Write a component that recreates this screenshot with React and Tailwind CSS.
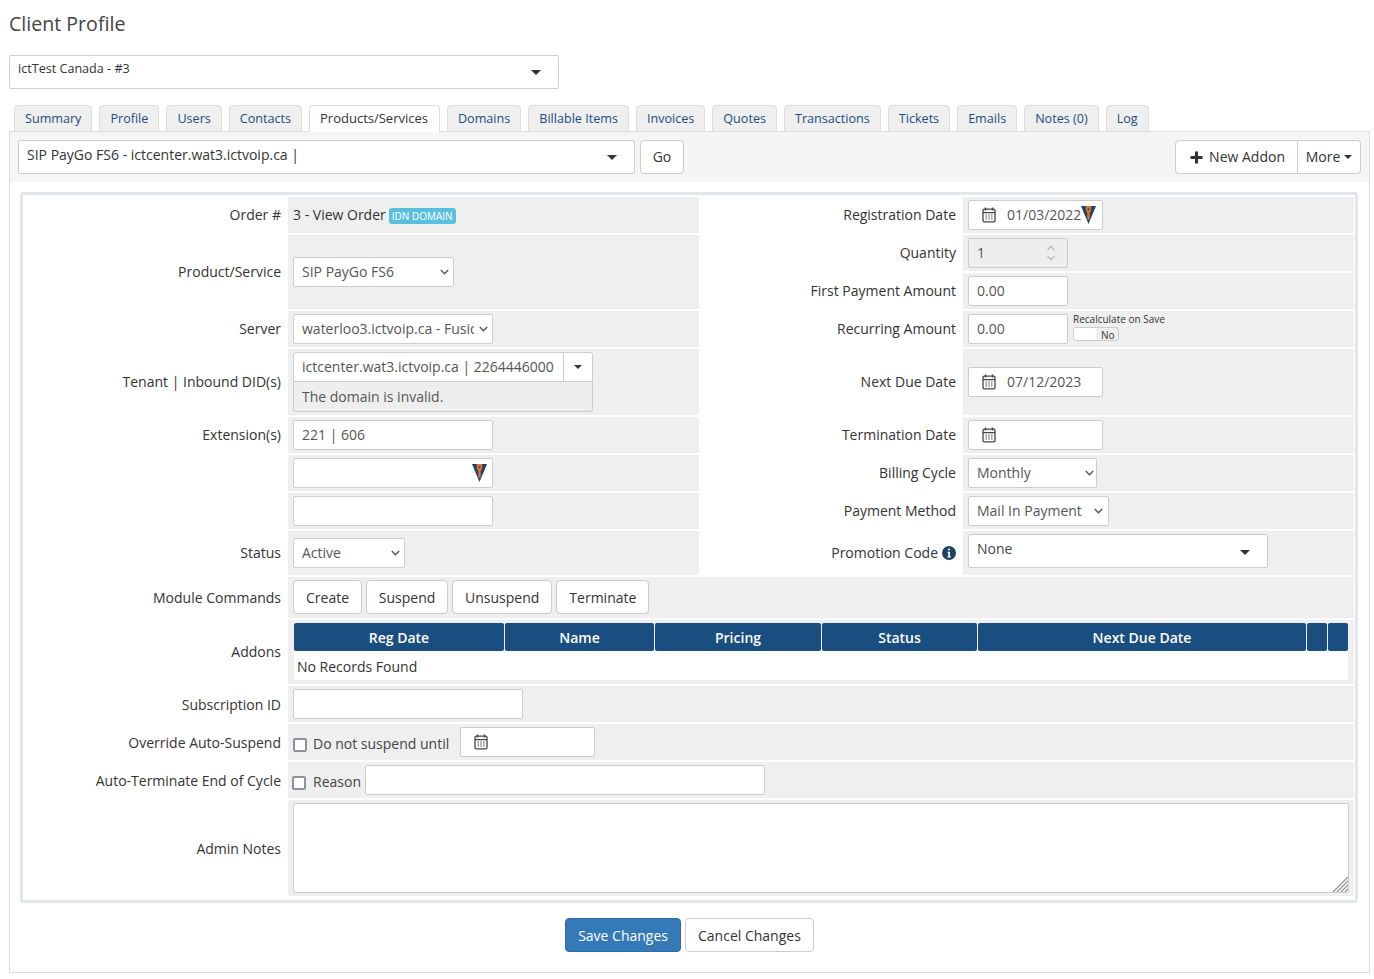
import React from 'react';

const tabs = ['Summary', 'Profile', 'Users', 'Contacts', 'Products/Services', 'Domains', 'Billable Items', 'Invoices', 'Quotes', 'Transactions', 'Tickets', 'Emails', 'Notes (0)', 'Log'];

const Caret = ({ className = '' }) => (
    <span className={`inline-block w-0 h-0 border-x-[5px] border-x-transparent border-t-[5px] border-t-[#333] ${className}`} />
);

const Calendar = () => (
    <svg width="14" height="16" viewBox="0 0 14 16" className="shrink-0">
        <path d="M3.500 .5v3M10.500 .5v3" stroke="#444" strokeWidth="1.400" fill="none" />
        <rect x="1" y="2.200" width="12" height="12.600" rx="1.400" stroke="#444" strokeWidth="1.300" fill="none" />
        <path d="M1 5.600h12" stroke="#444" strokeWidth="1.300" />
        <path d="M3.500 8h7M3.500 10h7M3.500 12h7" stroke="#444" strokeWidth="1.200" strokeDasharray="1.400 1.400" fill="none" />
    </svg>
);

const VoipLogo = () => (
    <svg width="15" height="18" viewBox="0 0 15 18" className="shrink-0">
        <path d="M0 0h15L7.500 18z" fill="#1c4468" />
        <path d="M4.800 0h5.400v4.500L8.700 7v6.500H6.300V7L4.800 4.500z" fill="#e8702a" />
        <circle cx="7.500" cy="3.200" r="1" fill="#1c4468" />
    </svg>
);

const Label = ({ children, className = '' }) => (
    <div className={`flex items-center justify-end pr-[5px] text-[#333] ${className}`}>{children}</div>
);

const Cell = ({ children, className = '' }) => (
    <div className={`bg-[#efefef] flex items-center px-[5px] ${className}`}>{children}</div>
);

const inputClass = 'h-[30px] bg-white border border-[#ccc] rounded-[2px] px-[8px] pb-[2px] text-[#555] outline-none';

const Select = ({ value, className = '', arrowClass = 'right-[5px]' }) => (
    <div className={`relative ${className}`}>
        <select defaultValue={value} className={`${inputClass} w-full appearance-none !pb-0 !pr-[18px]`}>
            <option>{value}</option>
        </select>
        <svg width="9" height="6" viewBox="0 0 9 6" className={`absolute top-[12px] ${arrowClass}`}>
            <path d="M.8 1l3.700 3.700L8.200 1" stroke="#555" strokeWidth="1.400" fill="none" />
        </svg>
    </div>
);

const DateField = ({ value, logo }) => (
    <div className={`${inputClass} !pb-0 w-[135px] flex items-center !pl-[13px] !pr-[4px]`}>
        <Calendar />
        <span className="ml-[11px]">{value}</span>
        {logo && <VoipLogo />}
    </div>
);

const Btn = ({ children, className = '' }) => (
    <button className={`h-[34px] px-[12px] bg-white border border-[#ccc] rounded-[4px] text-[#333] ${className}`}>{children}</button>
);

const headers = [
    ['Reg Date', 'w-[210px]'],
    ['Name', 'w-[149px]'],
    ['Pricing', 'w-[166px]'],
    ['Status', 'w-[155px]'],
    ['Next Due Date', 'w-[328px]'],
    ['', 'w-[20px]'],
    ['', 'w-[20px]'],
];

const App = () => {
    return (
        <div className="bg-white w-[1374px] h-[979px] overflow-hidden pl-[9px] pr-[4px] text-[14px] leading-[20px] text-[#333] font-['Open_Sans',sans-serif]">
            <h1 className="pt-[10px] h-[55px] text-[19.6px] leading-[28px] font-normal text-[#444]">Client Profile</h1>

            {/* client picker */}
            <div className="relative w-[550px] h-[34px] bg-white border border-[#ccc] rounded-[2px] pl-[8px] pt-[4px] text-[12.6px] leading-[18px]">
                ictTest Canada - #3
                <Caret className="absolute right-[17px] top-[14px]" />
            </div>

            {/* tabs */}
            <div className="flex gap-[7px] pl-[5px] mt-[16px] h-[26px] relative z-10">
                {tabs.map((t) => {
                    const active = t === 'Products/Services';
                    return (
                        <div
                            key={t}
                            className={`h-[27px] border border-[#ddd] rounded-t-[4px] leading-[25px] ${active ? 'pl-[10px] pr-[11px] text-[13px] bg-white border-b-white text-[#333]' : 'px-[10px] text-[12.6px] bg-[#efefef] border-b-[#ddd] text-[#1a4d80]'}`}
                        >
                            {t}
                        </div>
                    );
                })}
            </div>

            <div className="border border-[#ddd] w-[1361px] h-[842px]">
                {/* product picker */}
                <div className="bg-[#f5f5f5] h-[50px] flex items-center pl-[8px] pr-[8px]">
                    <div className="relative w-[617px] h-[34px] bg-white border border-[#ccc] rounded-[2px] pl-[8px] pt-[4px]">
                        <span className="block w-[276px] overflow-hidden whitespace-nowrap">SIP PayGo FS6 - ictcenter.wat3.ictvoip.ca | 2264446000</span>
                        <Caret className="absolute right-[17px] top-[14px]" />
                    </div>
                    <Btn className="ml-[5px] w-[44px] !px-0">Go</Btn>
                    <div className="ml-auto flex">
                        <button className="h-[34px] pl-[14px] pr-[12px] flex items-center gap-[6px] bg-white border border-[#ccc] rounded-l-[4px] text-[#333]">
                            <svg width="13" height="13" viewBox="0 0 13 13">
                                <path d="M6.500 .5v12M.5 6.500h12" stroke="#333" strokeWidth="3" fill="none" />
                            </svg>
                            New Addon
                        </button>
                        <button className="h-[34px] w-[63px] flex items-center justify-center gap-[4px] bg-white border border-l-0 border-[#ccc] rounded-r-[4px] text-[#333]">
                            More
                            <Caret className="!border-x-[4px] !border-t-[4px]" />
                        </button>
                    </div>
                </div>

                {/* details form */}
                <div className="mt-[10px] ml-[10px] w-[1338px] h-[711px] border-[3px] border-[#e2e7e9] rounded-[3px] pt-[2px]">
                    <div className="grid grid-cols-[263px_411px_260px_391px] gap-[2px] grid-rows-[36px_36px_36px_36px_66px_36px_36px_36px_44px_41px_64px_36px_36px_36px_96px]">
                        <Label>Order #</Label>
                        <Cell>
                            <span>3 - View Order</span>
                            <span className="ml-[3px] mt-[1px] h-[16px] px-[3px] bg-[#5bc0de] rounded-[3px] text-white text-[10px] leading-[16px] uppercase">IDN Domain</span>
                        </Cell>
                        <Label>Registration Date</Label>
                        <Cell><DateField value="01/03/2022" logo /></Cell>

                        <Label className="row-span-2">Product/Service</Label>
                        <Cell className="row-span-2"><Select value="SIP PayGo FS6" className="w-[161px]" /></Cell>
                        <Label>Quantity</Label>
                        <Cell>
                            <div className="relative">
                                <input type="number" disabled defaultValue="1" className={`${inputClass} w-[100px] !bg-[#eee] [appearance:textfield] [&::-webkit-inner-spin-button]:appearance-none`} />
                                <svg width="10" height="16" viewBox="0 0 10 16" className="absolute right-[12px] top-[7px]">
                                    <path d="M1.500 5l3.500-3.500L8.500 5M1.500 11l3.500 3.500L8.500 11" stroke="#bbb" strokeWidth="1.500" fill="none" />
                                </svg>
                            </div>
                        </Cell>

                        <Label>First Payment Amount</Label>
                        <Cell><input defaultValue="0.00" className={`${inputClass} w-[100px]`} /></Cell>

                        <Label>Server</Label>
                        <Cell><Select value="waterloo3.ictvoip.ca - FusionPBX" className="w-[200px]" /></Cell>
                        <Label>Recurring Amount</Label>
                        <Cell>
                            <input defaultValue="0.00" className={`${inputClass} w-[100px]`} />
                            <div className="ml-[5px] pb-[4px] text-[10px] leading-[12px]">
                                <div>Recalculate on Save</div>
                                <div className="mt-[2px] w-[46px] h-[14px] bg-[#efefef] border border-[#ccc] rounded-[3px] flex overflow-hidden">
                                    <span className="w-[22px] bg-white" />
                                    <span className="leading-[14px] pl-[5px]">No</span>
                                </div>
                            </div>
                        </Cell>

                        <Label>Tenant | Inbound DID(s)</Label>
                        <Cell className="!items-start pt-[3px]">
                            <div className="w-[300px]">
                                <div className="h-[30px] flex bg-white border border-[#ccc] rounded-t-[3px] text-[#555]">
                                    <span className="flex-1 pl-[8px] leading-[28px] whitespace-nowrap">ictcenter.wat3.ictvoip.ca | 2264446000</span>
                                    <span className="w-[29px] border-l border-[#ccc] flex items-center justify-center"><Caret className="!border-x-[4px] !border-t-[4px]" /></span>
                                </div>
                                <div className="h-[30px] bg-[#eee] border border-t-0 border-[#ccc] rounded-b-[3px] pl-[8px] leading-[29px] text-[#555]">The domain is invalid.</div>
                            </div>
                        </Cell>
                        <Label>Next Due Date</Label>
                        <Cell><DateField value="07/12/2023" /></Cell>

                        <Label>Extension(s)</Label>
                        <Cell><input defaultValue="221 | 606" className={`${inputClass} w-[200px]`} /></Cell>
                        <Label>Termination Date</Label>
                        <Cell><DateField /></Cell>

                        <Label />
                        <Cell>
                            <div className={`${inputClass} !pb-0 w-[200px] flex items-center justify-end !pr-[5px]`}><VoipLogo /></div>
                        </Cell>
                        <Label>Billing Cycle</Label>
                        <Cell><Select value="Monthly" className="w-[129px]" arrowClass="right-[3px]" /></Cell>

                        <Label />
                        <Cell><input className={`${inputClass} w-[200px]`} /></Cell>
                        <Label>Payment Method</Label>
                        <Cell><Select value="Mail In Payment" className="w-[141px]" arrowClass="right-[6px]" /></Cell>

                        <Label>Status</Label>
                        <Cell><Select value="Active" className="w-[112px]" /></Cell>
                        <Label className="gap-[4px]">
                            Promotion Code
                            <svg width="14" height="14" viewBox="0 0 14 14">
                                <circle cx="7" cy="7" r="7" fill="#1c4468" />
                                <path d="M7 2.400a1.100 1.100 0 1 1 0 2.200 1.100 1.100 0 0 1 0-2.200zM5.600 5.800h2.400v4.400h.9v1.200H5.400v-1.200h.9V7H5.600z" fill="#fff" />
                            </svg>
                        </Label>
                        <Cell className="!items-start pt-[3px]">
                            <div className="relative w-[300px] h-[34px] bg-white border border-[#ccc] rounded-[2px] pl-[8px] pt-[4px] text-[#444]">
                                None
                                <Caret className="absolute right-[17px] top-[15px]" />
                            </div>
                        </Cell>

                        <Label>Module Commands</Label>
                        <Cell className="col-span-3 !items-start pt-[3px] gap-[4px]">
                            <Btn className="pt-[2px]">Create</Btn>
                            <Btn className="w-[82px] !px-0 pt-[2px]">Suspend</Btn>
                            <Btn className="pt-[2px]">Unsuspend</Btn>
                            <Btn className="pt-[2px]">Terminate</Btn>
                        </Cell>

                        <Label>Addons</Label>
                        <Cell className="col-span-3 !items-start pt-[3px] pl-[6px]">
                            <div className="w-[1054px]">
                                <div className="flex gap-[1px] h-[28px]">
                                    {headers.map(([h, w], i) => (
                                        <div key={i} className={`${w} bg-[#1a4d80] rounded-[2px] text-white font-semibold text-center leading-[29px]`}>{h}</div>
                                    ))}
                                </div>
                                <div className="h-[29px] bg-white pl-[3px] pt-[6px]">No Records Found</div>
                            </div>
                        </Cell>

                        <Label className="pt-[2px]">Subscription ID</Label>
                        <Cell className="col-span-3"><input className={`${inputClass} w-[230px]`} /></Cell>

                        <Label className="pt-[2px]">Override Auto-Suspend</Label>
                        <Cell className="col-span-3">
                            <input type="checkbox" className="appearance-none size-[14px] bg-white border-2 border-[#8f8f9d] rounded-[2px] mt-[5px]" />
                            <span className="ml-[6px] mt-[4px] text-[#444]">Do not suspend until</span>
                            <div className="ml-[11px]"><DateField /></div>
                        </Cell>

                        <Label className="pt-[2px]">Auto-Terminate End of Cycle</Label>
                        <Cell className="col-span-3">
                            <input type="checkbox" className="appearance-none -ml-[1px] size-[14px] bg-white border-2 border-[#8f8f9d] rounded-[2px] mt-[5px]" />
                            <span className="ml-[7px] mt-[4px] text-[#444]">Reason</span>
                            <input className={`${inputClass} ml-[4px] w-[400px]`} />
                        </Cell>

                        <Label className="pt-[2px]">Admin Notes</Label>
                        <Cell className="col-span-3 !items-start pt-[3px]">
                            <div className="relative w-[1056px] h-[90px]">
                                <textarea className="block w-full h-full resize-none bg-white border border-[#ccc] rounded-[2px] outline-none" />
                                {/* oversized resize grip */}
                                <svg width="15" height="15" viewBox="0 0 15 15" className="absolute right-[1px] bottom-[1px]">
                                    <path d="M0 15L15 0M4 15L15 4M8 15l7-7M12 15l3-3" stroke="#888" strokeWidth="1.200" fill="none" />
                                </svg>
                            </div>
                        </Cell>
                    </div>
                </div>

                {/* form actions */}
                <div className="flex justify-center gap-[4px] mt-[15px]">
                    <Btn className="!bg-[#337ab7] !border-[#2e6da4] !text-white pt-[2px]">Save Changes</Btn>
                    <Btn className="pt-[2px]">Cancel Changes</Btn>
                </div>
            </div>
        </div>
    );
};

export default App;
